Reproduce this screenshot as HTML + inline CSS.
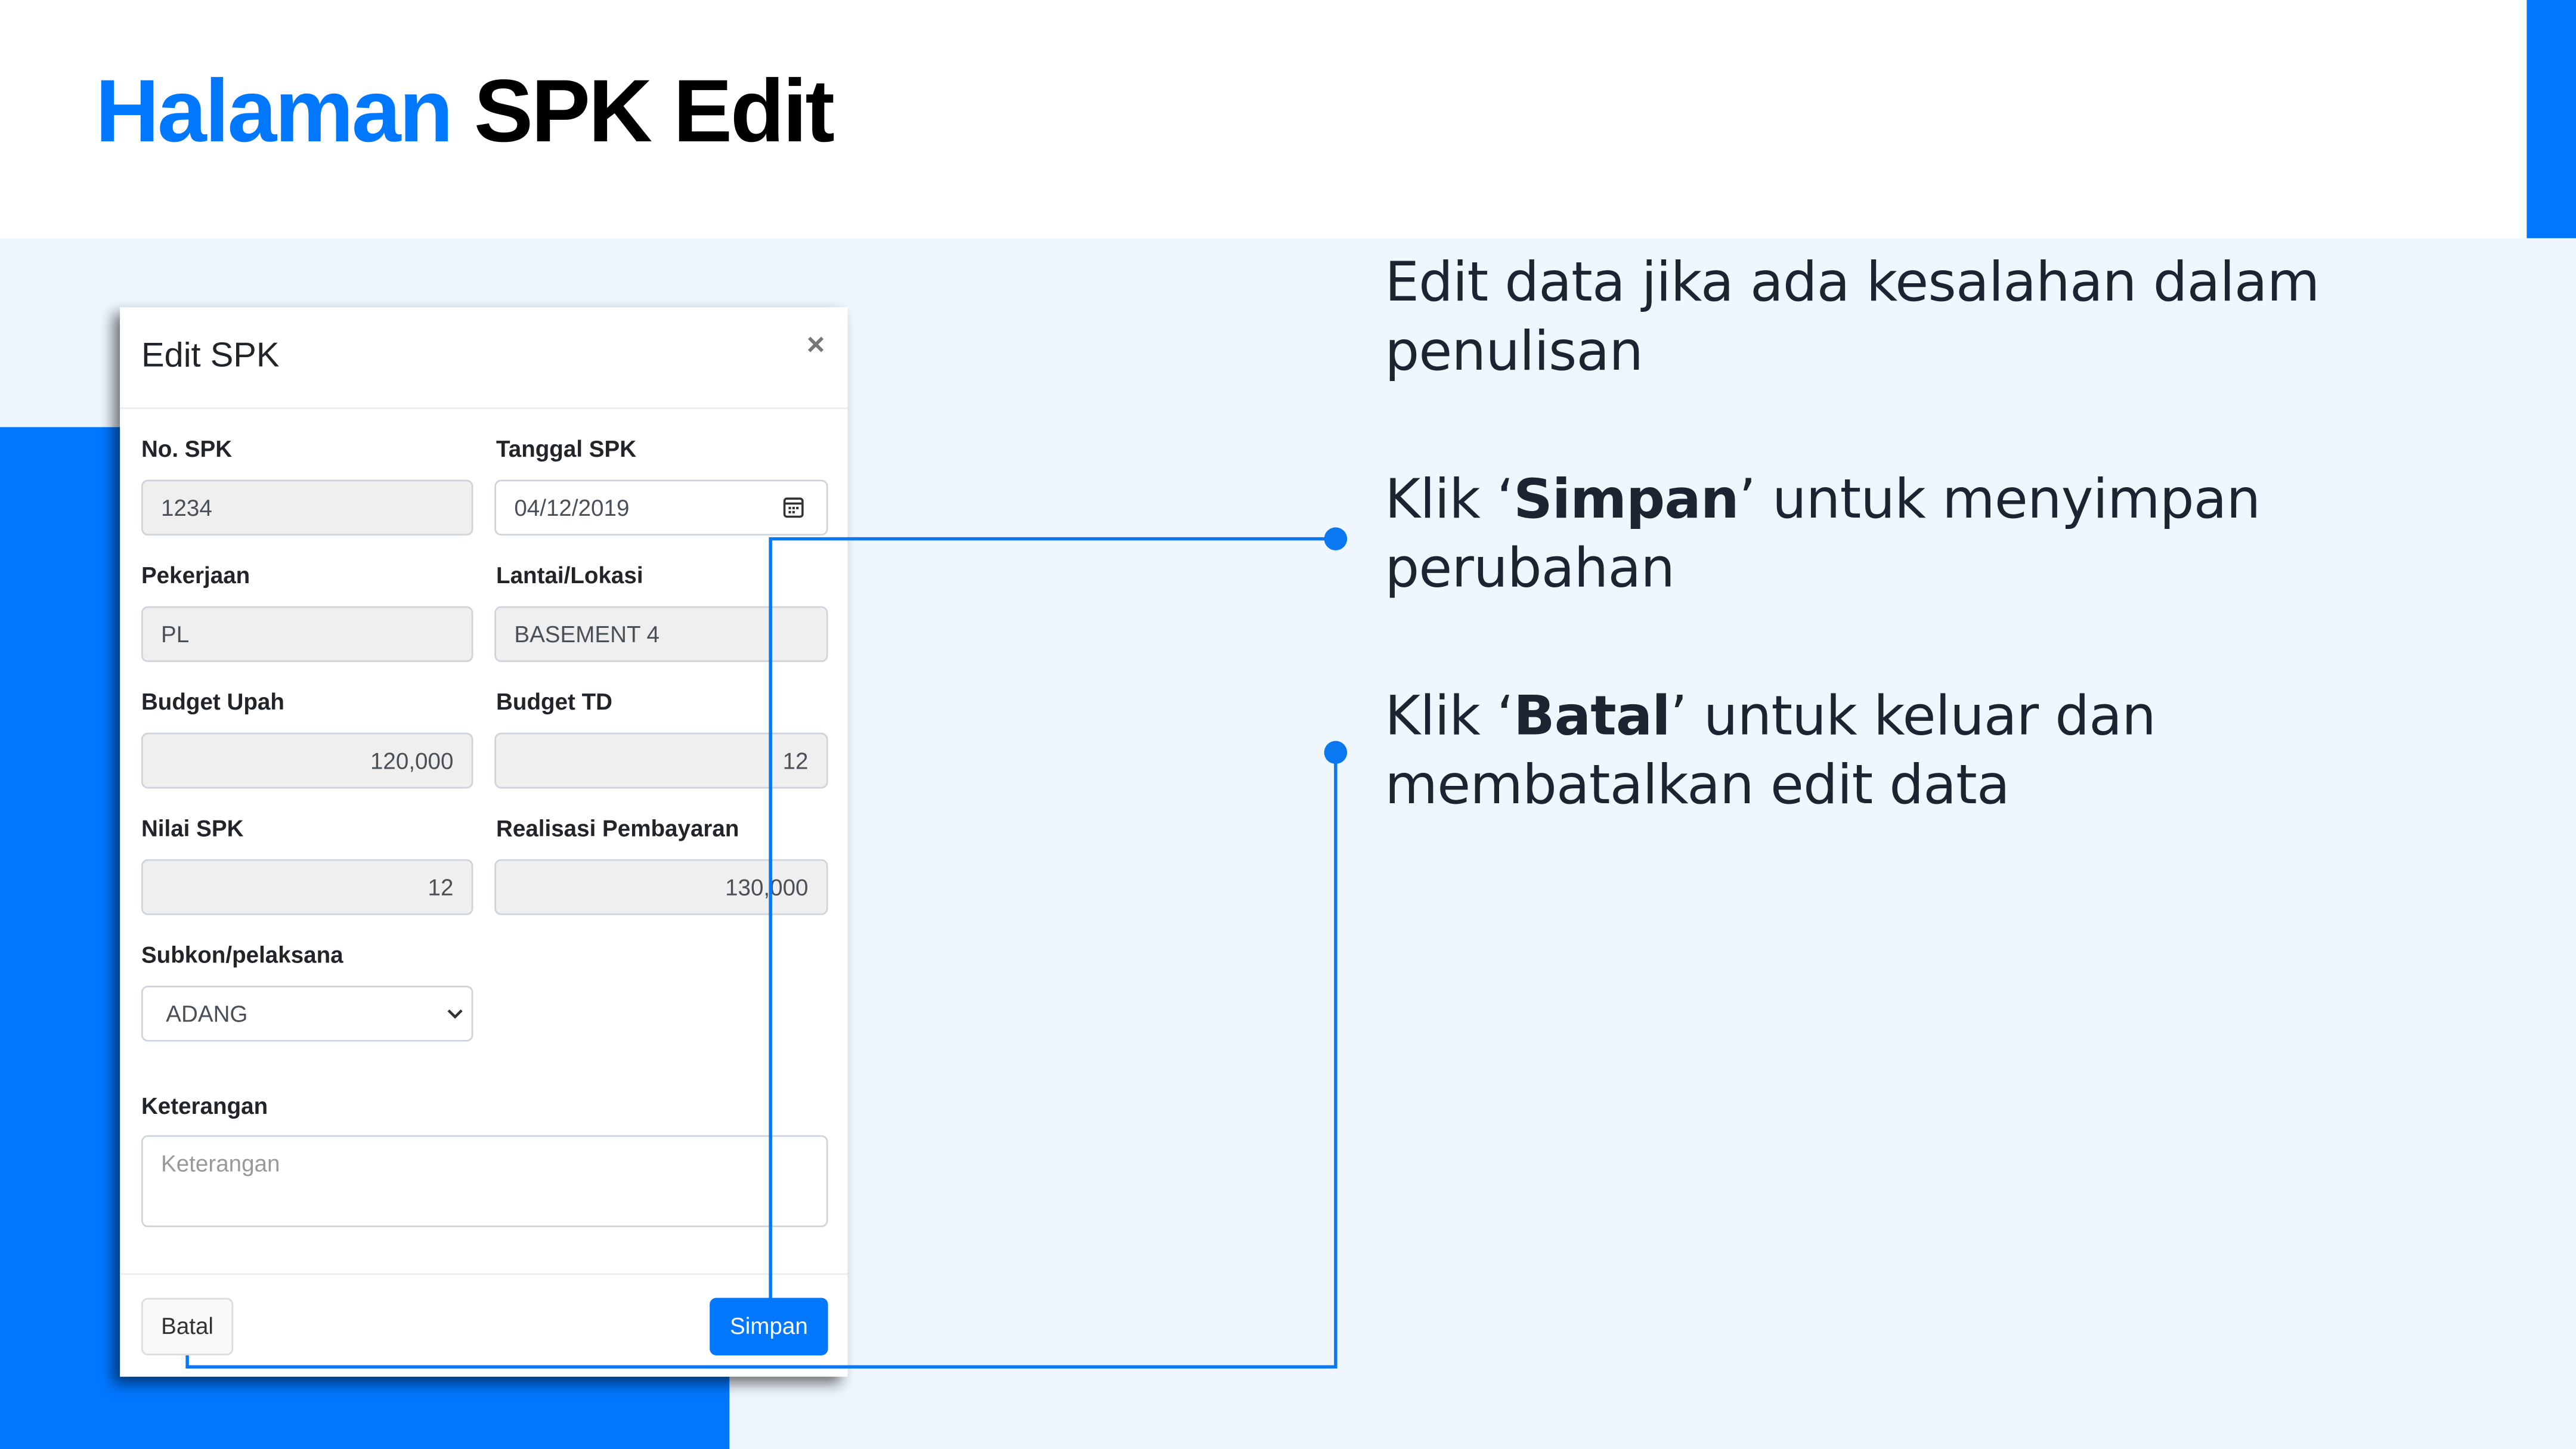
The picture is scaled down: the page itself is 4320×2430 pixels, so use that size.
<!DOCTYPE html>
<html><head><meta charset="utf-8"><style>
*{margin:0;padding:0;box-sizing:border-box}
html,body{width:4320px;height:2430px;overflow:hidden;background:#EFF6FE}
#s{position:absolute;left:0;top:0;width:1568px;height:882px;transform:scale(2.75510);transform-origin:0 0;font-family:"Liberation Sans",sans-serif;background:#EFF6FE}
.a{position:absolute}
.lbl{position:absolute;font-size:14px;font-weight:bold;color:#212529}
.in{position:absolute;height:34px;border:1px solid #ced4da;border-radius:4px;background:#efefef;font-size:14px;color:#495057;line-height:32px;padding:0 11px}
.r{text-align:right}
.t{position:absolute;left:843px;font-size:33px;color:#1d2330;line-height:42px;font-family:"DejaVu Sans","Liberation Sans",sans-serif;letter-spacing:-0.3px}
</style></head><body><div id="s">
<div class="a" style="left:0;top:0;width:1568px;height:145px;background:#fff"></div>
<div class="a" style="left:1538px;top:0;width:30px;height:145px;background:#0077ff"></div>
<div class="a" style="left:0;top:260px;width:444px;height:622px;background:#0077ff"></div>
<div class="a" style="left:58px;top:37px;font-size:54px;font-weight:bold;letter-spacing:-1.2px;color:#000"><span style="color:#0077ff">Halaman</span> SPK Edit</div>

<div class="a" style="left:73px;top:187px;width:443px;height:651px;background:#fff;box-shadow:-4px 4px 8px rgba(0,0,0,.55)">
<div class="a" style="left:13px;top:18px;font-size:21px;color:#212529">Edit SPK</div>
<div class="a" style="left:418px;top:13px;font-size:19px;font-weight:bold;color:#777">×</div>
<div class="a" style="left:0;top:61px;width:443px;height:1px;background:#e9ecef"></div>
</div>
<div class="lbl" style="left:86px;top:265px">No. SPK</div>
<div class="lbl" style="left:302px;top:265px">Tanggal SPK</div>
<div class="in" style="left:86px;top:292px;width:202px">1234</div>
<div class="in" style="left:301px;top:292px;width:203px;background:#fff">04/12/2019
<svg class="a" style="left:174px;top:9px" width="14" height="14" viewBox="0 0 14 14"><rect x="1.5" y="1.5" width="11" height="11" rx="1.5" fill="none" stroke="#333" stroke-width="1.3"/><line x1="1.5" y1="4.5" x2="12.5" y2="4.5" stroke="#333" stroke-width="1.3"/><rect x="4" y="6.5" width="1.5" height="1.5" fill="#333"/><rect x="6.3" y="6.5" width="1.5" height="1.5" fill="#333"/><rect x="8.6" y="6.5" width="1.5" height="1.5" fill="#333"/><rect x="4" y="9" width="1.5" height="1.5" fill="#333"/><rect x="6.3" y="9" width="1.5" height="1.5" fill="#333"/></svg></div>
<div class="lbl" style="left:86px;top:342px">Pekerjaan</div>
<div class="lbl" style="left:302px;top:342px">Lantai/Lokasi</div>
<div class="in" style="left:86px;top:369px;width:202px">PL</div>
<div class="in" style="left:301px;top:369px;width:203px">BASEMENT 4</div>
<div class="lbl" style="left:86px;top:419px">Budget Upah</div>
<div class="lbl" style="left:302px;top:419px">Budget TD</div>
<div class="in r" style="left:86px;top:446px;width:202px">120,000</div>
<div class="in r" style="left:301px;top:446px;width:203px">12</div>
<div class="lbl" style="left:86px;top:496px">Nilai SPK</div>
<div class="lbl" style="left:302px;top:496px">Realisasi Pembayaran</div>
<div class="in r" style="left:86px;top:523px;width:202px">12</div>
<div class="in r" style="left:301px;top:523px;width:203px">130,000</div>
<div class="lbl" style="left:86px;top:573px">Subkon/pelaksana</div>
<div class="in" style="left:86px;top:600px;width:202px;background:#fff;padding-left:14px">ADANG
<svg class="a" style="left:185px;top:12px" width="10" height="8" viewBox="0 0 10 8"><path d="M1 2l4 4 4-4" fill="none" stroke="#333" stroke-width="1.6"/></svg></div>
<div class="lbl" style="left:86px;top:665px">Keterangan</div>
<div class="in" style="left:86px;top:691px;width:418px;height:56px;background:#fff;line-height:normal;padding-top:8px;color:#999">Keterangan</div>
<div class="a" style="left:73px;top:775px;width:443px;height:1px;background:#e9ecef"></div>
<div class="a" style="left:86px;top:790px;width:56px;height:35px;border:1px solid #ddd;border-radius:4px;background:#f8f9fa;font-size:14px;color:#333;text-align:center;line-height:33px">Batal</div>
<div class="a" style="left:432px;top:790px;width:72px;height:35px;border-radius:4px;background:#0077ff;font-size:14px;color:#fff;text-align:center;line-height:35px">Simpan</div>

<svg class="a" style="left:0;top:0" width="1568" height="882"><g fill="none" stroke="#0a78f0" stroke-width="2"><path d="M813 328H469V790"/><path d="M813 458V832H114V825"/></g><circle cx="813" cy="328" r="7" fill="#0a78f0"/><circle cx="813" cy="458" r="7" fill="#0a78f0"/></svg>

<div class="t" style="top:151px">Edit data jika ada kesalahan dalam<br>penulisan</div>
<div class="t" style="top:283px">Klik ‘<b>Simpan</b>’ untuk menyimpan<br>perubahan</div>
<div class="t" style="top:415px">Klik ‘<b>Batal</b>’ untuk keluar dan<br>membatalkan edit data</div>
</div></body></html>
